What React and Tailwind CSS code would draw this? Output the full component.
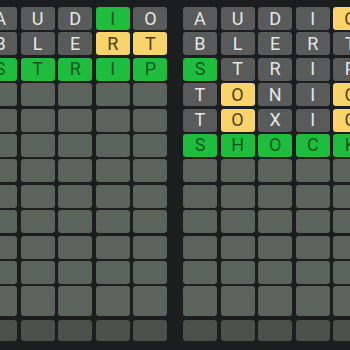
const left = [
  [["A", "x"], ["U", "x"], ["D", "x"], ["I", "g"], ["O", "x"]],
  [["B", "x"], ["L", "x"], ["E", "x"], ["R", "y"], ["T", "y"]],
  [["S", "g"], ["T", "g"], ["R", "g"], ["I", "g"], ["P", "g"]],
];

const right = [
  [["A", "x"], ["U", "x"], ["D", "x"], ["I", "x"], ["O", "y"]],
  [["B", "x"], ["L", "x"], ["E", "x"], ["R", "x"], ["T", "x"]],
  [["S", "g"], ["T", "x"], ["R", "x"], ["I", "x"], ["P", "x"]],
  [["T", "x"], ["O", "y"], ["N", "x"], ["I", "x"], ["C", "y"]],
  [["T", "x"], ["O", "y"], ["X", "x"], ["I", "x"], ["C", "y"]],
  [["S", "g"], ["H", "g"], ["O", "g"], ["C", "g"], ["K", "g"]],
];

const tileColor = {
  x: "bg-[#595b5a] text-[#e6e6e6]",
  g: "bg-[#1fbd3d] text-[#0d5a1f]",
  y: "bg-[#f9d46b] text-[#4d3d12]",
  e: "bg-[#5b635d]",
  d: "bg-[#4a514b]",
};

const Tile = ({ letter, kind, h }) => (
  <div
    className={`w-[34px] ${h} rounded-[3px] flex items-center justify-center text-[18px] leading-none ${tileColor[kind]}`}
  >
    {letter}
  </div>
);

const Board = ({ rows }) => {
  const all = [];
  for (let r = 0; r < 13; r++) {
    const row = rows[r] || [["", "e"], ["", "e"], ["", "e"], ["", "e"], ["", "e"]];
    all.push(r === 12 ? row.map(() => ["", "d"]) : row);
  }
  return (
    <div className="flex flex-col gap-[2.4px]">
      {all.map((row, r) => (
        <div
          key={r}
          className={`flex gap-[3.6px] ${r === 12 ? "mt-[1.6px]" : ""}`}
        >
          {row.map(([l, k], c) => (
            <Tile
              key={c}
              letter={l}
              kind={k}
              h={r === 11 ? "h-[30px]" : r === 12 ? "h-[21px]" : "h-[23px]"}
            />
          ))}
        </div>
      ))}
    </div>
  );
};

export default function App() {
  return (
    <div
      className="w-[350px] h-[350px] overflow-hidden bg-[#1b1d1f]"
      style={{ fontFamily: "Roboto, 'Liberation Sans', sans-serif" }}
    >
      <div className="flex gap-[15.6px] ml-[-17px] pt-[7px]">
        <Board rows={left} />
        <Board rows={right} />
      </div>
    </div>
  );
}
